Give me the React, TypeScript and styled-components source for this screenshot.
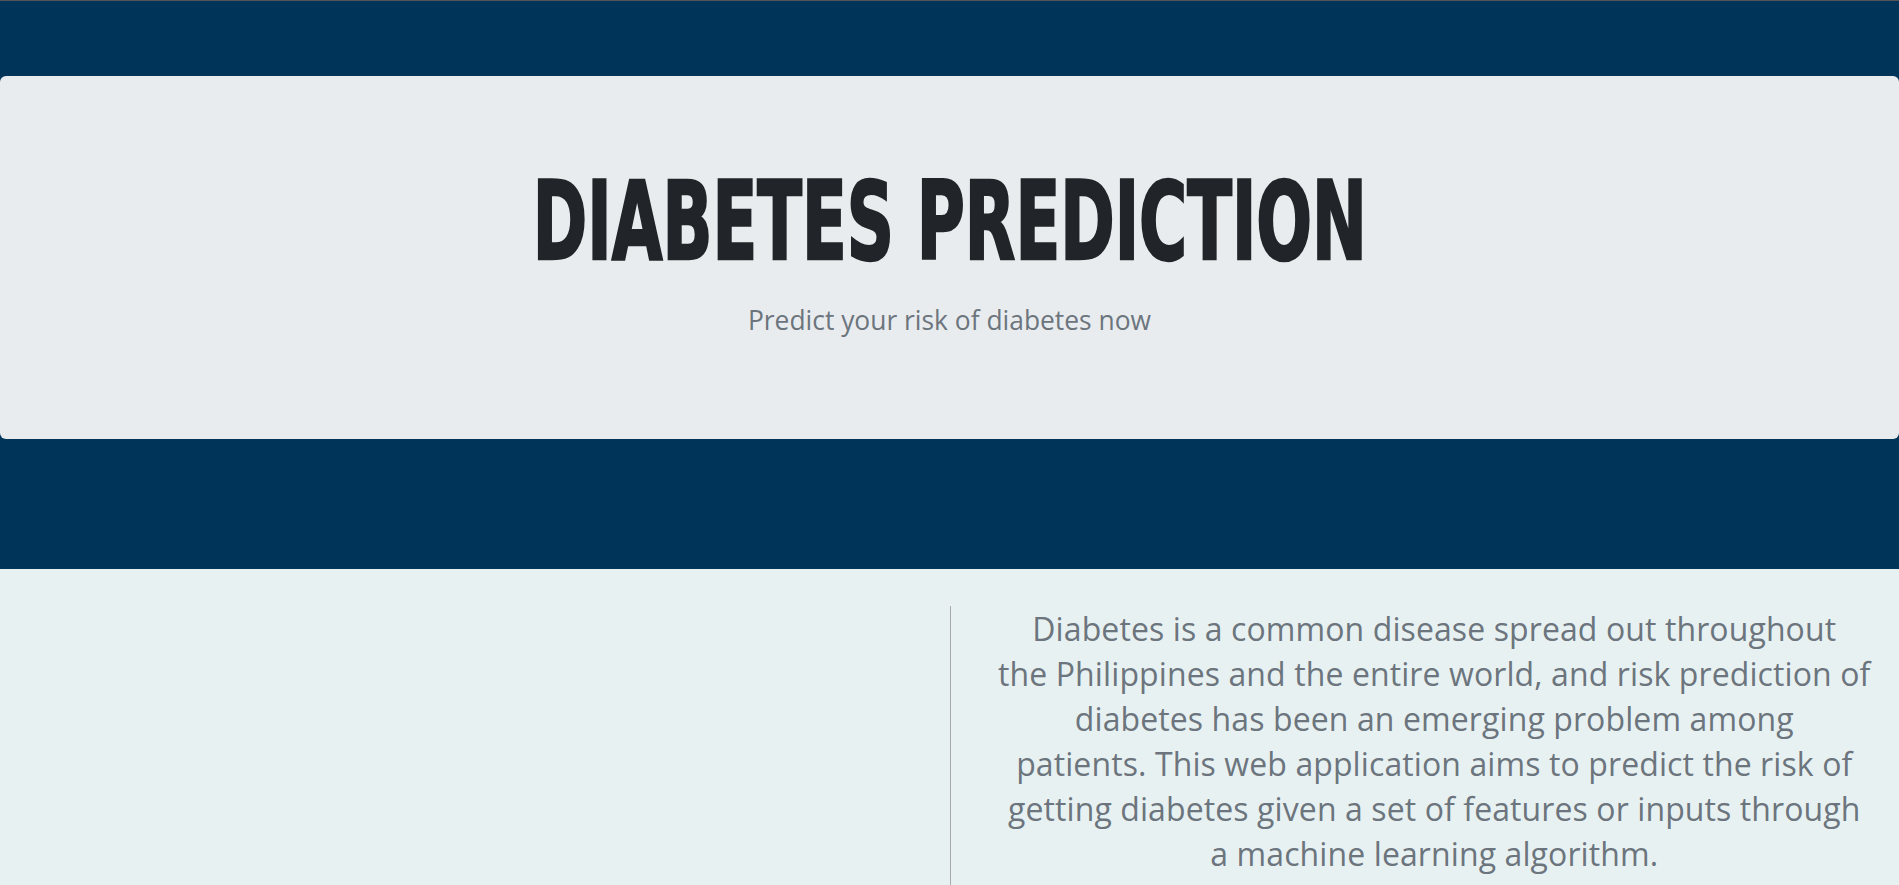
import React from "react";
import styled, { createGlobalStyle } from "styled-components";

const GlobalStyle = createGlobalStyle`
  html, body {
    margin: 0;
    padding: 0;
  }
  body {
    background: #e8f1f2;
    border-top: 1px solid #555555;
    font-family: "Open Sans", "Noto Sans", sans-serif;
  }
  * { box-sizing: border-box; }
`;

const Header = styled.header`
  background: #003459;
  padding: 75px 0 130px;
`;

const Jumbotron = styled.section`
  background: #e9ecef;
  border-radius: 6px;
  height: 363px;
  display: flex;
  flex-direction: column;
  align-items: center;
  padding-top: 90px;
`;

const Title = styled.h1`
  margin: 0;
  font-family: "DejaVu Sans Condensed", "Liberation Sans Narrow", "Liberation Sans", sans-serif;
  font-weight: 700;
  font-size: 108px;
  line-height: 112px;
  color: #212529;
  -webkit-text-stroke: 2.5px #212529;
  letter-spacing: 0;
  transform: scaleX(0.675);
  white-space: nowrap;
`;

const Lead = styled.p`
  margin: 24px 0 0;
  font-family: "Open Sans", sans-serif;
  font-size: 26.4px;
  font-weight: 400;
  color: #6c757d;
`;

const Main = styled.main`
  display: grid;
  grid-template-columns: 1fr 1fr;
  padding-top: 37px;
`;

const Column = styled.div<{ $divider?: boolean }>`
  min-height: 420px;
  padding: 0 15px 0 34px;
  border-left: ${(p) => (p.$divider ? "1px solid #aaaaaa" : "none")};
`;

const About = styled.p`
  margin: 0;
  text-align: center;
  font-family: "Open Sans", sans-serif;
  font-size: 32px;
  letter-spacing: 0.1px;
  line-height: 45px;
  color: #6c757d;
`;

export default function App() {
  return (
    <>
      <GlobalStyle />
      <Header>
        <Jumbotron>
          <Title>DIABETES PREDICTION</Title>
          <Lead>Predict your risk of diabetes now</Lead>
        </Jumbotron>
      </Header>
      <Main>
        <Column />
        <Column $divider>
          <About>
            Diabetes is a common disease spread out throughout
            <br />
            the Philippines and the entire world, and risk prediction of
            <br />
            diabetes has been an emerging problem among
            <br />
            patients. This web application aims to predict the risk of
            <br />
            getting diabetes given a set of features or inputs through
            <br />
            a machine learning algorithm.
          </About>
        </Column>
      </Main>
    </>
  );
}
